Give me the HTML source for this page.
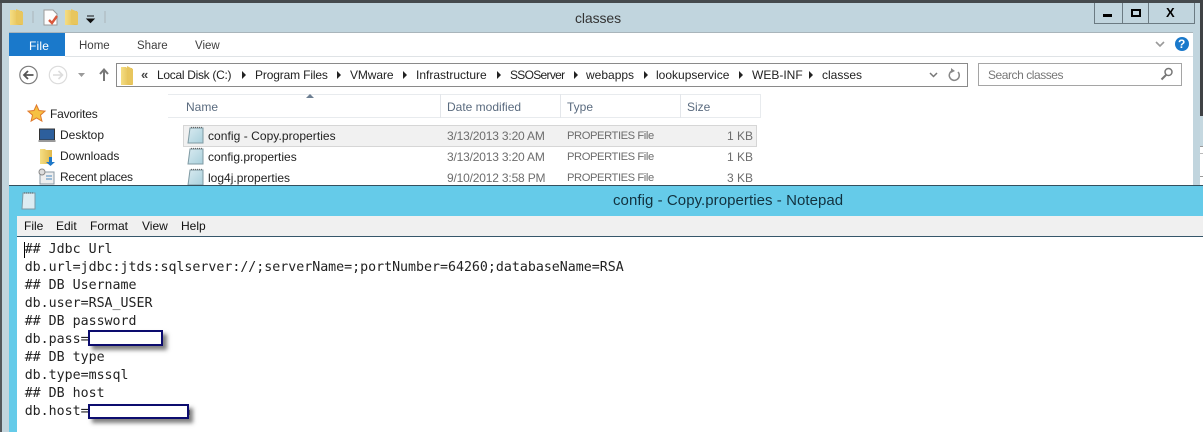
<!DOCTYPE html>
<html><head><meta charset="utf-8"><style>
html,body{margin:0;padding:0;width:1203px;height:432px;overflow:hidden;background:#fff}
#r{position:relative;width:1203px;height:432px;overflow:hidden;font-family:"Liberation Sans",sans-serif;font-size:12px;color:#222}
.a{position:absolute}
.t{position:absolute;white-space:nowrap;line-height:16px}
.g{color:#6d6d6d}
.d{letter-spacing:-.18px}
.p{font-size:11.2px;letter-spacing:-.42px}
.m{position:absolute;left:24.7px;font-family:"DejaVu Sans Mono","Liberation Mono",monospace;font-size:13.28px;line-height:18px;white-space:pre;color:#222}
.tri{position:absolute;width:0;height:0;border-left:4px solid #222;border-top:4px solid transparent;border-bottom:4px solid transparent}
.red{position:absolute;background:#fff;border:2px solid #0c0c6e;box-shadow:4px 4px 4px rgba(60,60,60,.65)}
.hl{position:absolute;top:94px;width:1px;height:24px;background:#e3e6ea}
</style></head><body><div id="r">
<div class="a" style="left:0;top:0;width:1203px;height:3px;background:#454a4d"></div>
<div class="a" style="left:0;top:3px;width:1200px;height:182px;background:#c1d5de"></div>
<div class="a" style="left:0;top:3px;width:2px;height:429px;background:#55585c"></div>
<div class="a" style="left:2px;top:3px;width:7px;height:429px;background:#c3d5dd"></div>
<div class="a" style="left:1200px;top:0;width:3px;height:116px;background:#3f4245"></div>
<div class="a" style="left:1200px;top:116px;width:3px;height:70px;background:#fff"></div>
<div class="a" style="left:1200px;top:116px;width:3px;height:30px;background:#c5d8e0"></div>
<div class="a" style="left:1200px;top:146px;width:3px;height:1px;background:#999"></div>
<div class="a" style="left:1200px;top:153px;width:3px;height:1px;background:#bbb"></div>
<div class="a" style="left:1200px;top:176px;width:3px;height:1px;background:#999"></div>
<div class="a" style="left:9px;top:32px;width:1184px;height:153px;background:#fff;border-top:1px solid #a9b5bb;box-sizing:border-box"></div>
<div class="a" style="left:9px;top:33px;width:56px;height:23px;background:#1a79cb"></div>
<div class="a" style="left:65px;top:56px;width:1128px;height:1px;background:#dfe3e6"></div>
<div class="a" style="left:1094px;top:3px;width:1px;height:20px;background:#6b7a82"></div>
<div class="a" style="left:1122px;top:3px;width:1px;height:20px;background:#6b7a82"></div>
<div class="a" style="left:1148px;top:3px;width:1px;height:20px;background:#6b7a82"></div>
<div class="a" style="left:1194px;top:3px;width:1px;height:20px;background:#6b7a82"></div>
<div class="a" style="left:1094px;top:23px;width:101px;height:1px;background:#6b7a82"></div>
<div class="a" style="left:1103px;top:14px;width:9px;height:3px;background:#000"></div>
<div class="a" style="left:1131px;top:9px;width:10px;height:8px;border:2px solid #000;box-sizing:border-box"></div>
<div class="t" style="left:1166px;top:5px;font-weight:bold;font-size:13px;color:#000">X</div>
<svg class="a" style="left:0;top:0" width="200" height="190" viewBox="0 0 200 190">
<defs><linearGradient id="f" x1="0" y1="0" x2="1" y2="0"><stop offset="0" stop-color="#f5de84"/><stop offset="1" stop-color="#e0b748"/></linearGradient></defs>
<path d="M10 10h5l1 1h6v14H10z" fill="url(#f)"/><path d="M16 9l7 3v13l-7-2z" fill="#e8c65e"/>
<path d="M33 11v12M105 11v12" stroke="#aab5ba" stroke-width="1"/>
<path d="M44 10h9l4 4v11H44z" fill="#fdfdfd" stroke="#9a9a9a"/><path d="M49 20l3 3 5-7" stroke="#d9573a" stroke-width="2.4" fill="none"/>
<path d="M65 10h5l1 1h6v14H65z" fill="url(#f)"/><path d="M71 9l7 3v13l-7-2z" fill="#e8c65e"/>
<path d="M87 16h7M87 19h7l-3.500 3.500z" stroke="#111" fill="#111" stroke-width="1"/>
<circle cx="28.500" cy="75" r="8.700" fill="#fff" stroke="#7c7c7c" stroke-width="1.200"/>
<path d="M33.500 75h-9M28 71l-4 4 4 4" stroke="#555" stroke-width="1.800" fill="none"/>
<circle cx="58" cy="75" r="8.700" fill="#fff" stroke="#dcdcdc" stroke-width="1.200"/>
<path d="M53 75h9M58.500 71l4 4-4 4" stroke="#dcdcdc" stroke-width="1.600" fill="none"/>
<path d="M78 73h7l-3.500 4z" fill="#9a9a9a"/>
<path d="M104 81V70M100 74l4-4.500 4 4.500" stroke="#777" stroke-width="2" fill="none"/>
<path d="M121 67h5l1 1h5v17h-11z" fill="url(#f)"/><path d="M127 66l6 3v16l-6-2z" fill="#e8c65e"/>
<path d="M36.500 105l2.500 5.500 6 .6-4.500 4 1.400 6-5.400-3.200-5.400 3.200 1.400-6-4.500-4 6-.6z" fill="#f6c143" stroke="#e0792c"/>
<rect x="39.500" y="129" width="15" height="11" fill="#2d5f9c" stroke="#333"/><rect x="38.500" y="140" width="17" height="2" fill="#999"/>
<path d="M40 149h5l1 1h6v14H40z" fill="url(#f)"/><path d="M49 157v5h-3l4.500 4 4.500-4h-3v-5z" fill="#1f78c8"/>
<rect x="40" y="172" width="14" height="12" fill="#eee" stroke="#8a9aa5"/><circle cx="42" cy="172" r="3" fill="#ddd" stroke="#888"/><path d="M46 176h6M46 179h6" stroke="#4a8ac0"/>
</svg>
<div class="t" style="left:29px;top:38px;color:#fff;font-size:12px;letter-spacing:.2px">File</div>
<div class="t" style="left:79px;top:38px;font-size:11.500px;color:#3f3f3f">Home</div>
<div class="t" style="left:137px;top:38px;font-size:11.500px;color:#3f3f3f">Share</div>
<div class="t" style="left:195px;top:38px;font-size:11.500px;color:#3f3f3f">View</div>
<div class="t" style="left:575px;top:10px;font-size:14px;letter-spacing:-.1px;color:#333">classes</div>
<svg class="a" style="left:1150px;top:33px" width="45" height="24" viewBox="0 0 45 24">
<path d="M6 9l4 4 4-4" stroke="#9a9a9a" stroke-width="1.600" fill="none"/><circle cx="32" cy="11" r="7" fill="#1a79cb"/>
</svg>
<div class="t" style="left:1178px;top:36px;font-weight:bold;font-size:12px;color:#fff">?</div>
<div class="a" style="left:116px;top:63px;width:852px;height:24px;border:1px solid #8a8a8a;box-sizing:border-box"></div>
<div class="a" style="left:978px;top:63px;width:204px;height:23px;border:1px solid #a5a5a5;box-sizing:border-box"></div>
<div class="t" style="left:141px;top:67px;font-size:13px;font-weight:bold;color:#444">«</div>
<div class="t" style="left:157px;top:67px;font-size:12px;letter-spacing:-.3px">Local Disk (C:)</div>
<div class="tri" style="left:242px;top:71px"></div>
<div class="t" style="left:255px;top:67px;font-size:12px;letter-spacing:-.15px">Program Files</div>
<div class="tri" style="left:337px;top:71px"></div>
<div class="t" style="left:350px;top:67px;font-size:12px;letter-spacing:-.1px">VMware</div>
<div class="tri" style="left:403px;top:71px"></div>
<div class="t" style="left:416px;top:67px;font-size:12px">Infrastructure</div>
<div class="tri" style="left:497px;top:71px"></div>
<div class="t" style="left:510px;top:67px;font-size:12px;letter-spacing:-.7px">SSOServer</div>
<div class="tri" style="left:574px;top:71px"></div>
<div class="t" style="left:586px;top:67px;font-size:12px">webapps</div>
<div class="tri" style="left:644px;top:71px"></div>
<div class="t" style="left:656px;top:67px;font-size:12px">lookupservice</div>
<div class="tri" style="left:739px;top:71px"></div>
<div class="t" style="left:752px;top:67px;font-size:12px">WEB-INF</div>
<div class="tri" style="left:809px;top:71px"></div>
<div class="t" style="left:822px;top:67px;font-size:12px">classes</div>
<svg class="a" style="left:925px;top:63px" width="40" height="24" viewBox="0 0 40 24">
<path d="M5 10l3.500 3.500 3.500-3.500" stroke="#777" stroke-width="1.500" fill="none"/>
<path d="M33 9a5 5 0 1 1-5-1.500" stroke="#888" stroke-width="1.500" fill="none"/><path d="M26 5l4 3-4 2z" fill="#888"/>
</svg>
<div class="t g" style="left:988px;top:67px;font-size:12px;letter-spacing:-.45px;color:#777">Search classes</div>
<svg class="a" style="left:1158px;top:66px" width="18" height="16" viewBox="0 0 18 16">
<circle cx="10.500" cy="6" r="3.500" stroke="#777" stroke-width="1.500" fill="none"/><path d="M8 9l-4.500 4.500" stroke="#777" stroke-width="2"/>
</svg>
<div class="a" style="left:168px;top:94px;width:593px;height:24px;border:1px solid #e8ebee;border-left:0;box-sizing:border-box"></div>
<div class="hl" style="left:440px"></div><div class="hl" style="left:560px"></div><div class="hl" style="left:680px"></div>
<div class="a" style="left:306px;top:94px;border-left:4px solid transparent;border-right:4px solid transparent;border-bottom:4px solid #6d7f92"></div>
<div class="t" style="left:186px;top:99px;color:#5a6b7f">Name</div>
<div class="t" style="left:447px;top:99px;color:#5a6b7f">Date modified</div>
<div class="t" style="left:567px;top:99px;color:#5a6b7f">Type</div>
<div class="t" style="left:687px;top:99px;color:#5a6b7f">Size</div>
<div class="a" style="left:183px;top:125px;width:574px;height:22px;background:#f1f1f1;border:1px solid #d6d6d6;box-sizing:border-box"></div>
<svg class="a" style="left:186px;top:125px" width="20" height="62" viewBox="0 0 20 62">
<defs><linearGradient id="n" x1="0" y1="0" x2="1" y2="1"><stop offset="0" stop-color="#d8eaf0"/><stop offset="1" stop-color="#a9d0dc"/></linearGradient></defs>
<g fill="url(#n)" stroke="#7f9aa3"><path d="M4 3h13v15H2z"/><path d="M4 24h13v15H2z"/><path d="M4 45h13v15H2z"/></g>
<path d="M5 2.500h11M5 23.500h11M5 44.500h11" stroke="#666" stroke-width="1.200" stroke-dasharray="1 1"/>
</svg>
<div class="t" style="left:208px;top:128px;letter-spacing:.05px">config - Copy.properties</div>
<div class="t" style="left:208px;top:149px">config.properties</div>
<div class="t" style="left:208px;top:170px">log4j.properties</div>
<div class="t g d" style="left:447px;top:128px">3/13/2013 3:20 AM</div>
<div class="t g d" style="left:447px;top:149px">3/13/2013 3:20 AM</div>
<div class="t g d" style="left:447px;top:170px">9/10/2012 3:58 PM</div>
<div class="t g p" style="left:567px;top:128px">PROPERTIES File</div>
<div class="t g p" style="left:567px;top:149px">PROPERTIES File</div>
<div class="t g p" style="left:567px;top:170px">PROPERTIES File</div>
<div class="t g" style="left:700px;top:128px;width:53px;text-align:right">1 KB</div>
<div class="t g" style="left:700px;top:149px;width:53px;text-align:right">1 KB</div>
<div class="t g" style="left:700px;top:170px;width:53px;text-align:right">3 KB</div>
<div class="t" style="left:50px;top:106px;letter-spacing:-.2px">Favorites</div>
<div class="t" style="left:60px;top:127px">Desktop</div>
<div class="t" style="left:60px;top:148px">Downloads</div>
<div class="t" style="left:60px;top:169px;letter-spacing:-.25px">Recent places</div>
<div class="a" style="left:9px;top:185px;width:1194px;height:247px;background:#65cbe9;border-top:1px solid #33505e;box-sizing:border-box"></div>
<svg class="a" style="left:20px;top:191px" width="18" height="20" viewBox="0 0 18 20"><path d="M3 2h12v16H2z" fill="#dcecf2" stroke="#7d9aa5"/><path d="M4 2h10" stroke="#555" stroke-dasharray="1 1"/></svg>
<div class="t" style="left:613px;top:193px;font-size:15px;letter-spacing:.06px;color:#12323f">config - Copy.properties - Notepad</div>
<div class="a" style="left:17px;top:216px;width:1186px;height:20px;background:#f0f0f0"></div>
<div class="a" style="left:17px;top:236px;width:1186px;height:196px;background:#fff;border-top:1px solid #36566a;box-sizing:border-box"></div>
<div class="t" style="left:24px;top:218px;color:#111">File</div>
<div class="t" style="left:56px;top:218px;color:#111">Edit</div>
<div class="t" style="left:90px;top:218px;color:#111">Format</div>
<div class="t" style="left:142px;top:218px;color:#111">View</div>
<div class="t" style="left:181px;top:218px;color:#111">Help</div>
<div class="a" style="left:24px;top:242px;width:1px;height:16px;background:#000"></div>
<div class="m" style="top:241px">## Jdbc Url
db.url=jdbc:jtds:sqlserver://;serverName=;portNumber=64260;databaseName=RSA
## DB Username
db.user=RSA_USER
## DB password
db.pass=
## DB type
db.type=mssql
## DB host
db.host=</div>
<div class="red" style="left:88px;top:330px;width:71px;height:12px"></div>
<div class="red" style="left:87.500px;top:404px;width:97px;height:10.500px"></div>
<div class="a" style="left:189px;top:410px;width:1px;height:5px;background:#555"></div>
</div></body></html>
